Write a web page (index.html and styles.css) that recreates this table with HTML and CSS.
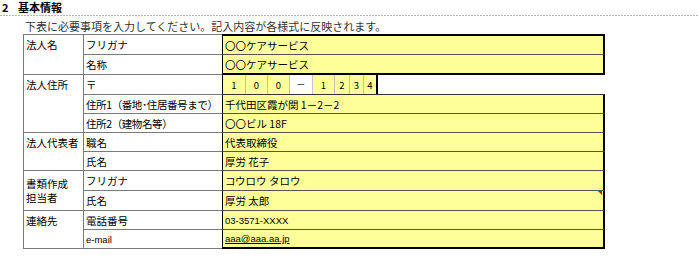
FILE: index.html
```html
<!DOCTYPE html>
<html>
<head>
	<title>基本情報</title>
	<meta charset="utf-8">
	<link rel="stylesheet" href="styles.css">
</head>
<body>
	<h2 class="title"><span class="num">2</span>基本情報</h2>
	<div class="rule"></div>
	<p class="lead">下表に必要事項を入力してください。記入内容が各様式に反映されます。</p>

	<div class="sheet">
		<!-- 法人名 -->
		<div class="group top" style="grid-row: 1 / span 2">法人名</div>
		<div class="label top">フリガナ</div>
		<div class="input top">〇〇ケアサービス</div>
		<div class="label">名称</div>
		<div class="input block-end">〇〇ケアサービス</div>

		<!-- 法人住所 -->
		<div class="group" style="grid-row: 3 / span 3">法人住所</div>
		<div class="label">〒</div>
		<div class="zip">
			<div class="zip-boxes">
				<span>1</span><span>0</span><span>0</span><span class="dash">－</span><span>1</span><span class="narrow">2</span><span class="narrow">3</span><span class="narrow last">4</span>
			</div>
		</div>
		<div class="label tight">住所1（番地･住居番号まで）</div>
		<div class="input">千代田区霞が関 1－2－2</div>
		<div class="label tight">住所2（建物名等）</div>
		<div class="input">〇〇ビル 18F</div>

		<!-- 法人代表者 -->
		<div class="group" style="grid-row: 6 / span 2">法人代表者</div>
		<div class="label">職名</div>
		<div class="input">代表取締役</div>
		<div class="label">氏名</div>
		<div class="input">厚労 花子</div>

		<!-- 書類作成担当者 -->
		<div class="group two-line" style="grid-row: 8 / span 2">書類作成<br>担当者</div>
		<div class="label">フリガナ</div>
		<div class="input">コウロウ タロウ</div>
		<div class="label">氏名</div>
		<div class="input has-note">厚労 太郎<span class="note"></span></div>

		<!-- 連絡先 -->
		<div class="group" style="grid-row: 10 / span 2">連絡先</div>
		<div class="label">電話番号</div>
		<div class="input latin">03-3571-XXXX</div>
		<div class="label latin">e-mail</div>
		<div class="input latin block-end"><a href="#">aaa@aaa.aa.jp</a></div>
	</div>
</body>
</html>
```

FILE: styles.css
```css
* {
	margin: 0;
	padding: 0;
	box-sizing: border-box;
}
body {
	font-family: "Noto Sans CJK JP", "Noto Sans", sans-serif;
	color: #000;
	background: #fff;
}
.title {
	height: 15px;
	line-height: 15px;
	padding-left: 2px;
	font-size: 11px;
	font-weight: bold;
}
.title .num {
	display: inline-block;
	width: 16px;
}
.rule {
	height: 1px;
	background: repeating-linear-gradient(90deg, #b4b4b4 0 2px, transparent 2px 3px);
}
.lead {
	margin-top: 2px;
	padding-left: 25px;
	height: 16px;
	line-height: 16px;
	font-size: 11px;
	color: #333;
}

/* the sheet: label column, sub label column, yellow input column */
.sheet {
	margin-left: 23px;
	display: grid;
	grid-template-columns: 61px 138px 383px;
	grid-template-rows: 21px 20px 20px 19px 19px 19px 19px 20px 20px 19px 19px;
	font-size: 10.5px;
}
.group {
	grid-column: 1;
	border-left: 1px solid #7a7a7a;
	border-right: 1px solid #7a7a7a;
	border-bottom: 1px solid #7a7a7a;
	padding-left: 2px;
	line-height: 19px;
}
.group.top {
	border-top: 1px solid #7a7a7a;
}
.group.two-line {
	line-height: 14px;
	padding-top: 6px;
}
.label {
	grid-column: 2;
	border-bottom: 1px solid #7a7a7a;
	padding-left: 2px;
	display: flex;
	align-items: center;
	white-space: nowrap;
}
.label.top {
	border-top: 1px solid #7a7a7a;
}
.label.tight {
	letter-spacing: -0.4px;
}
.input {
	grid-column: 3;
	position: relative;
	background: #ffff99;
	border-left: 1px solid #000;
	border-right: 2px solid #000;
	border-bottom: 1px solid #555;
	padding-left: 2px;
	display: flex;
	align-items: center;
	white-space: nowrap;
}
.input.top {
	border-top: 2px solid #000;
}
.input.block-end {
	border-bottom: 2px solid #000;
}
.latin {
	font-family: "Liberation Sans", Arial, sans-serif;
	font-size: 9.5px;
}
.input a {
	color: #000;
}

/* postal code boxes */
.zip {
	grid-column: 3;
	border-left: 1px solid #000;
	border-bottom: 1px solid #333;
	display: flex;
}
.zip-boxes {
	display: flex;
	font-size: 9.5px;
}
.zip-boxes span {
	width: 22px;
	background: #ffff99;
	border-right: 1px solid #c4c4a0;
	display: flex;
	align-items: center;
	justify-content: center;
}
.zip-boxes span:first-child {
	width: 23px;
}
.zip-boxes .dash {
	width: 23px;
	background: #fff;
	border-right-color: #c8c8c8;
	font-size: 9px;
}
.zip-boxes .narrow {
	width: 15px;
}
.zip-boxes .narrow + .narrow {
	width: 14px;
}
.zip-boxes .last {
	width: 14px;
	border-right: 2px solid #000;
}

/* red comment marker in the corner of a cell */
.note {
	position: absolute;
	top: 0;
	right: 1px;
	width: 0;
	height: 0;
	border-top: 4px solid #e00000;
	border-left: 4px solid transparent;
}
```
